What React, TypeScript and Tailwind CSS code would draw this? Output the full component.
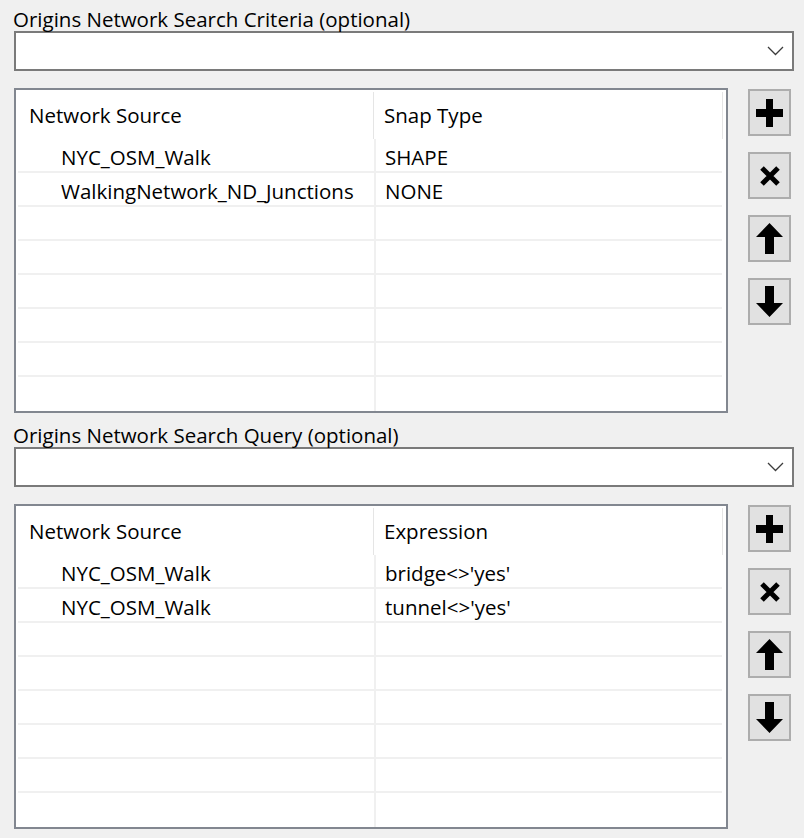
import React from "react";

const font = { fontFamily: '"Open Sans", "Noto Sans", sans-serif' };

type Row = [string, string];

function Chevron() {
  return (
    <svg width="17" height="10" viewBox="0 0 17 10" fill="none">
      <polyline points="1,1 8.5,8.5 16,1" stroke="#3c3c3c" strokeWidth="1.3" />
    </svg>
  );
}

function PlusIcon() {
  return (
    <svg width="27" height="28" viewBox="0 0 27 28">
      <rect x="10" y="0" width="7" height="28" fill="#000" />
      <rect x="0" y="10" width="27" height="8" fill="#000" />
    </svg>
  );
}

function CrossIcon() {
  return (
    <svg width="22" height="20" viewBox="0 0 22 20">
      <path d="M3 2 L19 18 M19 2 L3 18" stroke="#000" strokeWidth="5" />
    </svg>
  );
}

function ArrowIcon({ down }: { down?: boolean }) {
  return (
    <svg
      width="27"
      height="31"
      viewBox="0 0 27 31"
      className={down ? "rotate-180" : ""}>
      <polygon points="13.5,0 27,14 18,14 18,31 9,31 9,14 0,14" fill="#000" />
    </svg>
  );
}

function ToolButton({ children }: { children: React.ReactNode }) {
  return (
    <div className="flex h-[47px] w-[43px] items-center justify-center border-2 border-[#adadad] bg-[#e1e1e1]">
      {children}
    </div>
  );
}

function Dropdown() {
  return (
    <div className="flex h-10 w-[780px] items-center justify-end border-2 border-[#7a7a7a] bg-white pr-[8px]">
      <Chevron />
    </div>
  );
}

function Grid({ second, rows }: { second: string; rows: Row[] }) {
  const body: Row[] = [...rows];
  while (body.length < 8) body.push(["", ""]);

  return (
    <div className="h-[325px] w-[714px] border-2 border-[#828790] bg-white">
      {/* header */}
      <div className="flex h-[49px]">
        <div className="flex w-[357px] items-center pl-[13px]">Network Source</div>
        <div className="mt-[2px] w-px bg-[#e5e5e5]" />
        <div className="flex w-[348px] items-center pl-[10px]">{second}</div>
        <div className="mt-[2px] w-px bg-[#e5e5e5]" />
      </div>
      {/* rows */}
      <div className="pl-[2px]">
        {body.map((r, i) => (
          <div
            key={i}
            className={`flex h-[34px] w-[704px] ${i < 7 ? "border-b-2 border-[#f0f0f0]" : ""}`}>
            <div className="flex w-[356px] items-center pl-[43px] pt-[4px]">{r[0]}</div>
            <div className="w-[2px] bg-[#f0f0f0]" />
            <div className="flex flex-1 items-center pl-[9px] pt-[4px]">{r[1]}</div>
          </div>
        ))}
      </div>
    </div>
  );
}

function Section({
  label,
  second,
  rows,
  className,
}: {
  label: string;
  second: string;
  rows: Row[];
  className?: string;
}) {
  return (
    <div className={className}>
      <div className="-ml-px h-6">{label}</div>
      <Dropdown />
      <div className="mt-[17px] flex">
        <Grid second={second} rows={rows} />
        <div className="ml-[20px] mt-px flex flex-col gap-[16px]">
          <ToolButton>
            <PlusIcon />
          </ToolButton>
          <ToolButton>
            <CrossIcon />
          </ToolButton>
          <ToolButton>
            <ArrowIcon />
          </ToolButton>
          <ToolButton>
            <ArrowIcon down />
          </ToolButton>
        </div>
      </div>
    </div>
  );
}

export default function App() {
  return (
    <div
      className="h-[838px] w-[804px] overflow-hidden bg-[#f0f0f0] pl-[14px] pt-[7px] text-[20.5px] leading-[24px] text-black"
      style={font}>
      <Section
        label="Origins Network Search Criteria (optional)"
        second="Snap Type"
        rows={[
          ["NYC_OSM_Walk", "SHAPE"],
          ["WalkingNetwork_ND_Junctions", "NONE"],
        ]}
      />
      <Section
        className="mt-[10px]"
        label="Origins Network Search Query (optional)"
        second="Expression"
        rows={[
          ["NYC_OSM_Walk", "bridge<>'yes'"],
          ["NYC_OSM_Walk", "tunnel<>'yes'"],
        ]}
      />
    </div>
  );
}
